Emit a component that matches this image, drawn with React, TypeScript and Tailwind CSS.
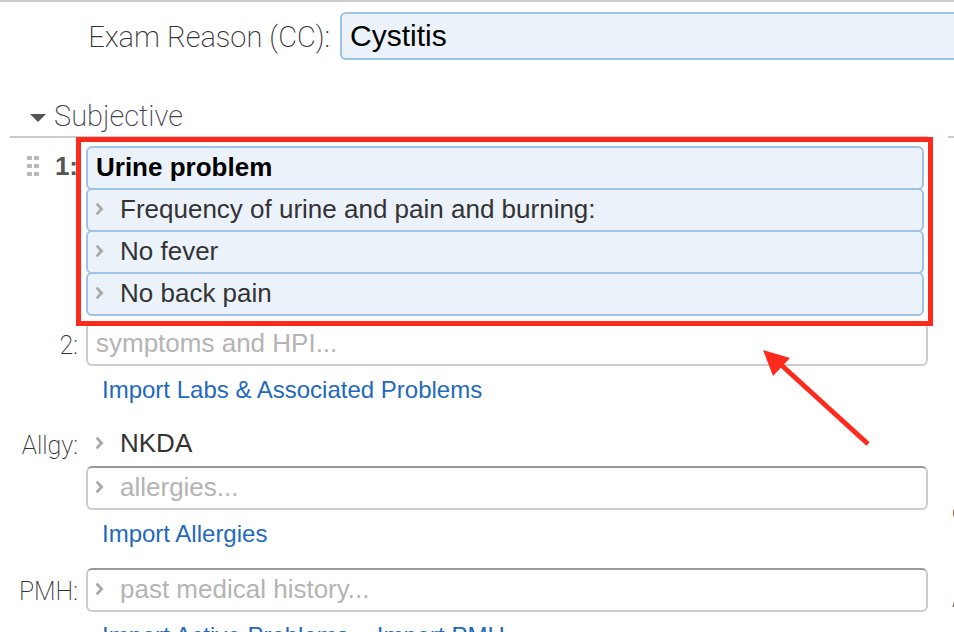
import type { ReactNode } from "react";

const thin = "font-['Roboto','Liberation_Sans',sans-serif] font-extralight";

function Chevron() {
  return (
    <svg className="mb-0.5 ml-2 h-3 w-2 shrink-0" viewBox="0 0 8 12" fill="none" aria-hidden="true">
      <path d="M0.6 0.6 L5.6 6 L0.6 11.4" stroke="#aaa" strokeWidth="2.8" />
    </svg>
  );
}

function Grip() {
  return (
    <svg className="h-5 w-3 shrink-0" viewBox="0 0 12 20" aria-hidden="true">
      {[0, 8, 16].map((y) => (
        <g key={y} fill="#b8b8b8">
          <rect x="0" y={y} width="5" height="4" />
          <rect x="7" y={y} width="5" height="4" />
        </g>
      ))}
    </svg>
  );
}

function Row({ label, children }: { label?: ReactNode; children: ReactNode }) {
  return (
    <div className="flex">
      <div className="flex w-[76px] shrink-0 justify-end pr-2">{label}</div>
      <div className="min-w-0 flex-1">{children}</div>
    </div>
  );
}

function RowLabel({ htmlFor, text }: { htmlFor: string; text: string }) {
  return (
    <label htmlFor={htmlFor} className={`${thin} h-11 text-[25px] leading-[48px] whitespace-nowrap text-[#333]`}>
      {text}
    </label>
  );
}

type FieldProps = { id: string; label: string; value?: string; placeholder?: string; arrow?: boolean };

const inputBase = "h-full min-w-0 flex-1 bg-transparent pb-0.5 text-[26px] outline-none placeholder:text-[#b4b4b4] placeholder:opacity-100";

function EmptyField({ id, label, placeholder, arrow }: FieldProps) {
  return (
    <div className="flex h-11 items-center rounded-md border-2 border-[#ccc] border-t-[#999] bg-white">
      {arrow && <Chevron />}
      <input id={id} aria-label={label} placeholder={placeholder} className={`${inputBase} ${arrow ? "pl-4" : "pl-2"}`} />
    </div>
  );
}

function FilledField({ id, label, value, arrow }: FieldProps) {
  return (
    <div className="-mb-0.5 flex h-11 items-center rounded-md border-2 border-[#9fc3e6] bg-[#ebf2fa]">
      {arrow && <Chevron />}
      <input
        id={id}
        aria-label={label}
        defaultValue={value}
        className={`${inputBase} ${arrow ? "pl-4 text-[#333]" : "pl-2 font-bold text-black"}`}
      />
    </div>
  );
}

function Links({ items }: { items: string[] }) {
  return (
    <div className="flex h-12 items-center gap-7 pl-4 text-2xl whitespace-nowrap text-[#2369bd]">
      {items.map((t) => (
        <a key={t} href="#">{t}</a>
      ))}
    </div>
  );
}

export default function App() {
  return (
    <div className="h-screen overflow-hidden border-t-2 border-[#ccc] bg-white font-['Liberation_Sans',Arial,sans-serif]">
      <div className="flex items-center pt-2.5">
        <label htmlFor="cc" className={`${thin} w-[340px] shrink-0 pt-1 pr-2.5 text-right text-[29px] whitespace-nowrap text-[#333]`}>
          Exam Reason (CC):
        </label>
        <input
          id="cc"
          defaultValue="Cystitis"
          className="h-12 min-w-0 flex-1 rounded-l-md border-2 border-r-0 border-[#9fc3e6] bg-[#ebf2fa] pl-2 text-[30px] text-black outline-none"
        />
      </div>

      <div className="flex gap-5 pt-9 pl-2.5">
        <section className="min-w-0 flex-1">
          <h2 className="border-b-2 border-[#ccc] pl-5">
            <button className={`${thin} flex h-10 items-center gap-2 pt-0.5 text-[29px] text-[#445]`}>
              <svg className="mt-0.5 h-2 w-4" viewBox="0 0 16 8" aria-hidden="true">
                <path d="M0 0 H16 L8 8 Z" fill="#555" />
              </svg>
              Subjective
            </button>
          </h2>

          <div className="relative z-10 pt-2 pb-2">
            <Row
              label={
                <div className="flex h-11 items-center gap-4 pb-1">
                  <Grip />
                  <label htmlFor="problem" className="text-[26px] font-bold text-[#555]">1:</label>
                </div>
              }
            >
              <div className="mr-1">
                <FilledField id="problem" label="Problem 1" value="Urine problem" />
                <FilledField id="d1" label="Detail 1" value="Frequency of urine and pain and burning:" arrow />
                <FilledField id="d2" label="Detail 2" value="No fever" arrow />
                <FilledField id="d3" label="Detail 3" value="No back pain" arrow />
              </div>
            </Row>
            <div className="pointer-events-none absolute -top-px -right-[5px] -bottom-1 left-[66px] border-5 border-[#ff2a1c]" />
          </div>

          <Row label={<RowLabel htmlFor="hpi" text="2:" />}>
            <div className="relative">
              <EmptyField id="hpi" label="Symptoms and HPI" placeholder="symptoms and HPI..." />
              <svg className="pointer-events-none absolute top-[26px] right-[58px] h-[98px] w-[108px]" viewBox="762 348 108 98" aria-hidden="true">
                <path d="M868 444 L778 362" stroke="#ff2a1c" strokeWidth="5" />
                <path d="M763 350 L790 358 L773 376 Z" fill="#ff2a1c" />
              </svg>
            </div>
            <Links items={["Import Labs & Associated Problems"]} />
          </Row>

          <div className="pt-2">
            <Row label={<RowLabel htmlFor="nkda" text="Allgy:" />}>
              <div className="flex h-11 items-center pl-0.5">
                <Chevron />
                <input id="nkda" aria-label="Allergy" defaultValue="NKDA" className={`${inputBase} pl-4 text-[#333]`} />
              </div>
              <EmptyField id="allergy" label="Allergies" placeholder="allergies..." arrow />
              <Links items={["Import Allergies"]} />
            </Row>
          </div>

          <div className="pt-2.5">
            <Row label={<RowLabel htmlFor="pmh" text="PMH:" />}>
              <EmptyField id="pmh" label="Past medical history" placeholder="past medical history..." arrow />
              <Links items={["Import Active Problems", "Import PMH"]} />
            </Row>
          </div>
        </section>

        <section className="w-1.5 shrink-0 pt-10">
          <div className="border-t-2 border-[#ccc]" />
          <div className={`${thin} pt-[360px] pl-1 text-[25px] leading-7 text-[#444]`}>
            <p>o</p>
            <p className="pt-[59px]">A</p>
          </div>
        </section>
      </div>
    </div>
  );
}
